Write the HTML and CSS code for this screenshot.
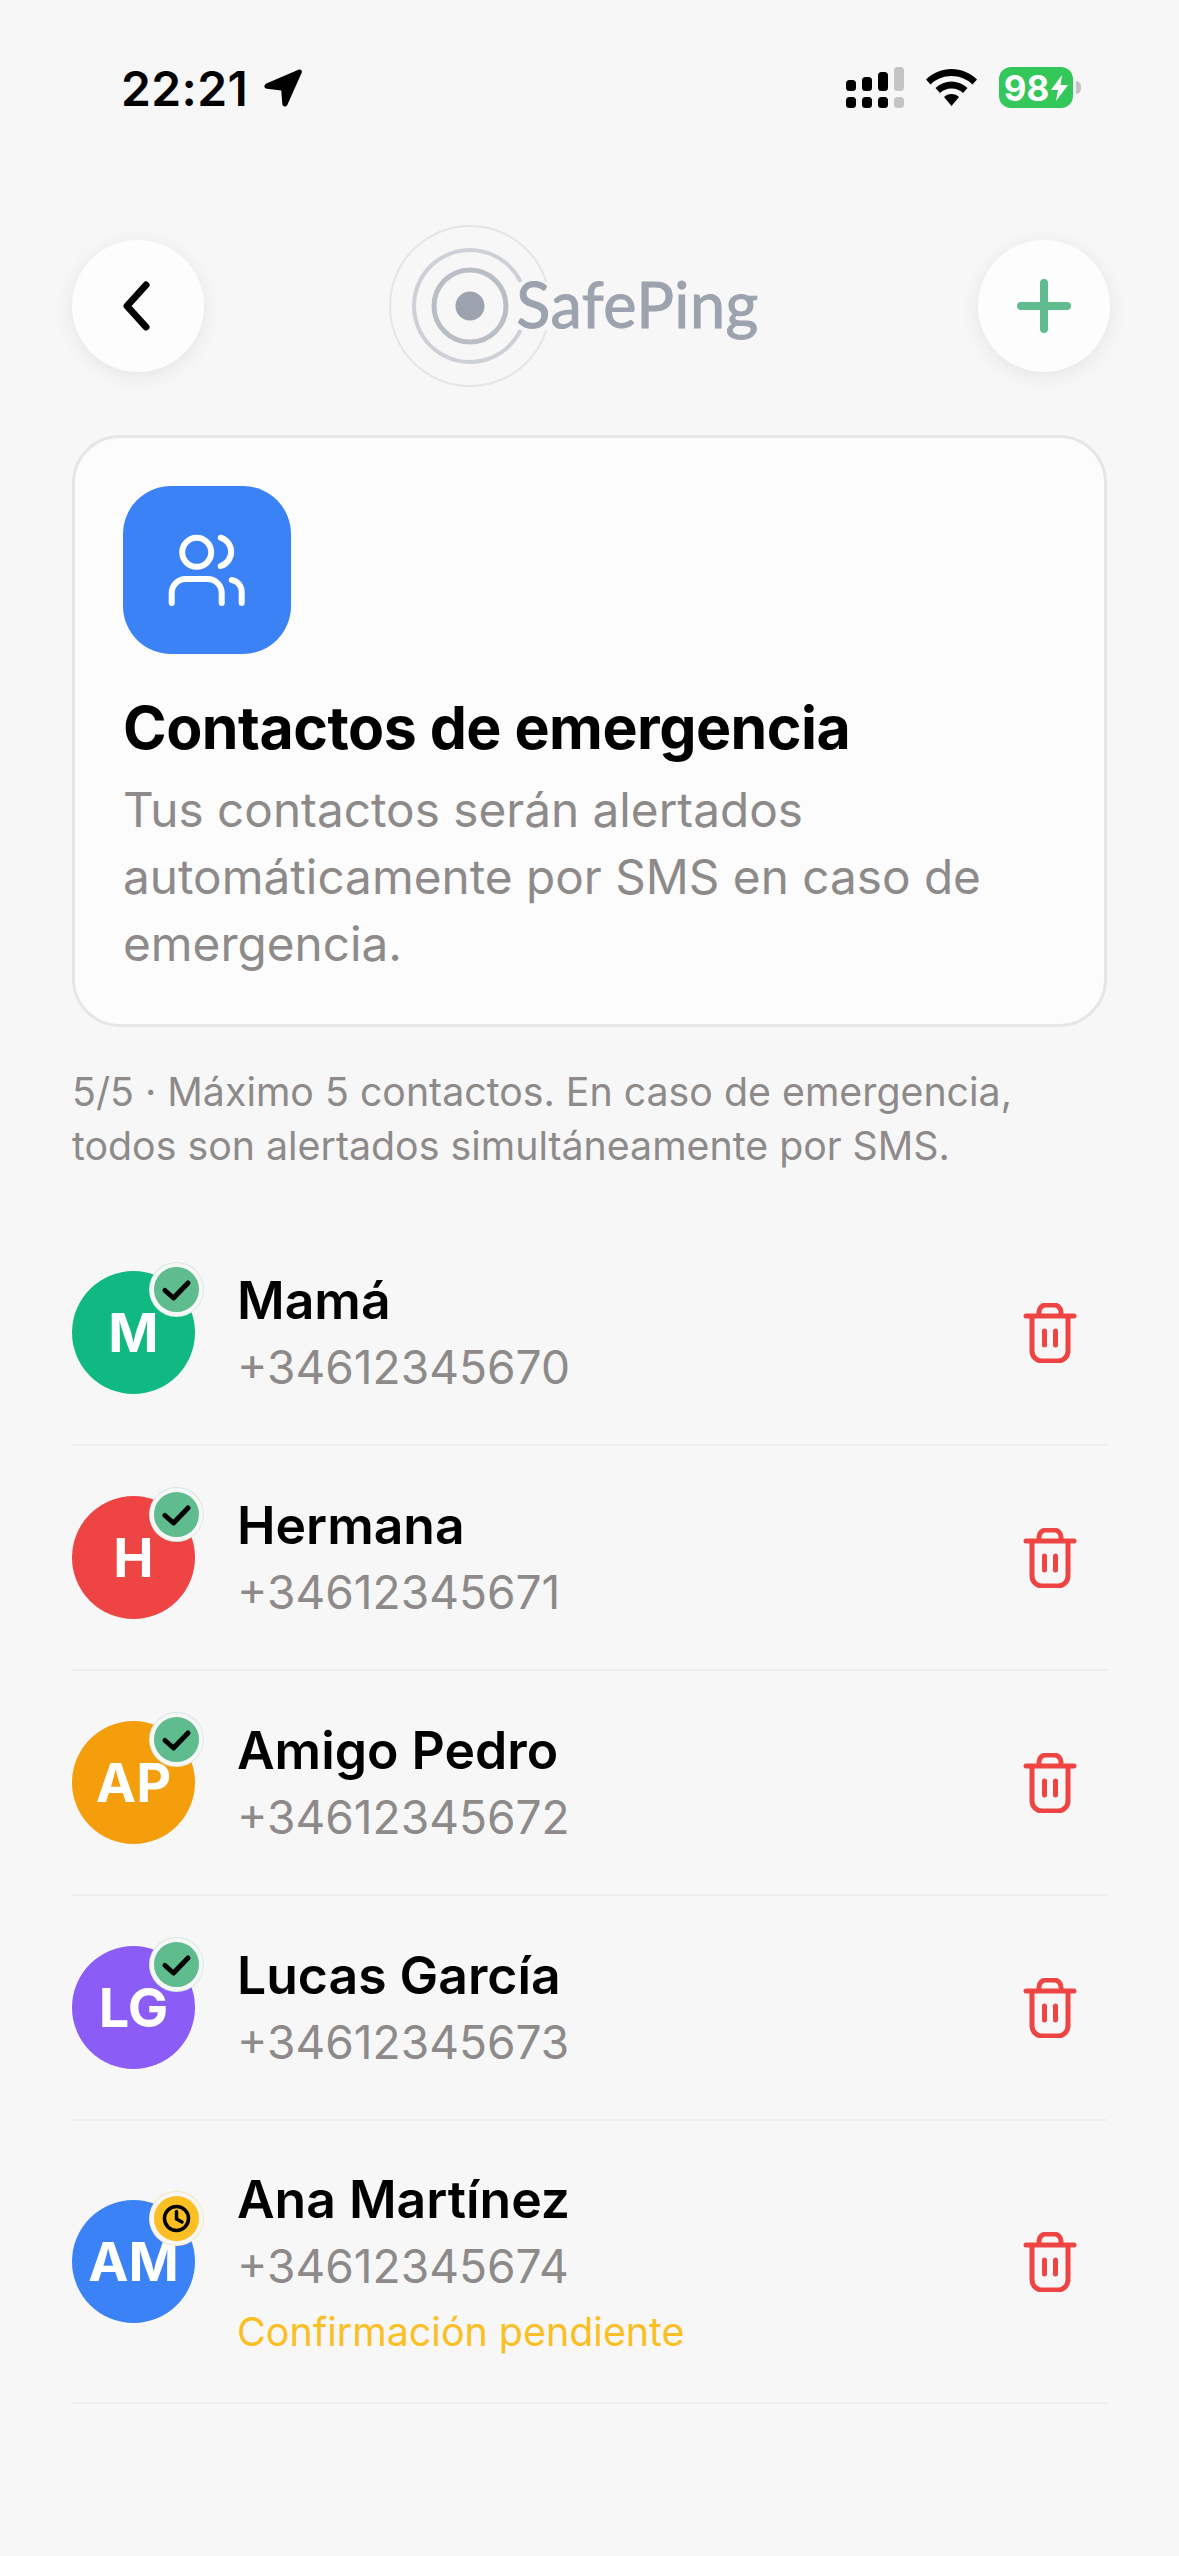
FILE: index.html
```html
<!DOCTYPE html>
<html lang="es">
<head>
    <meta charset="UTF-8">
    <meta name="viewport" content="width=device-width, initial-scale=1.0">
    <title>SafePing - Contactos de emergencia</title>
    <link rel="stylesheet" href="styles.css">
</head>
<body>
    <!-- Shared icons -->
    <svg class="icon-defs" aria-hidden="true">
        <symbol id="icon-trash" viewBox="0 0 54 60">
            <path d="M3 13H51M16 13V9a7 7 0 0 1 7-7h8a7 7 0 0 1 7 7v4M9 13V48a10 10 0 0 0 10 10h16a10 10 0 0 0 10-10V13M21.500 28V42M32.500 28V42"/>
        </symbol>
        <symbol id="icon-check" viewBox="0 0 45 45">
            <path d="M11 23.500L19.500 31L34 16"/>
        </symbol>
        <symbol id="icon-clock" viewBox="0 0 45 45">
            <circle cx="22.500" cy="22.500" r="12"/>
            <path d="M22.500 15.500V23L28 26"/>
        </symbol>
    </svg>

    <div class="status-bar">
        <div class="status-left">
            <span class="status-time">22:21</span>
            <svg class="status-arrow" viewBox="0 0 40 40"><path d="M36 1.500C38 1 39.500 2.500 38.800 4.500L24.500 36.500C23.300 39.500 19.500 39 19.300 36L18.300 22.500L4 20.800C1 20.500 .5 17 3.300 15.500Z"/></svg>
        </div>
        <div class="status-right">
            <svg class="status-signal" viewBox="0 0 58 41">
                <rect x="0" y="13" width="10" height="11" rx="3.500"/>
                <rect x="16" y="10" width="10" height="14" rx="3.500"/>
                <rect x="32" y="5" width="10" height="19" rx="3.500"/>
                <rect class="signal-off" x="48" y="0" width="10" height="24" rx="3.500"/>
                <rect x="0" y="30" width="10" height="11" rx="3.500"/>
                <rect x="16" y="30" width="10" height="11" rx="3.500"/>
                <rect x="32" y="30" width="10" height="11" rx="3.500"/>
                <rect class="signal-off" x="48" y="30" width="10" height="11" rx="3.500"/>
            </svg>
            <svg class="status-wifi" viewBox="0 0 51 37">
                <path d="M25.500 0C35 0 44 3.800 51 10.500L46.500 15.500C40.800 10 33.500 7 25.500 7S10.200 10 4.500 15.500L0 10.500C7 3.800 16 0 25.500 0Z"/>
                <path d="M25.500 12.500C31.500 12.500 37 14.800 41.500 19L37 24C34 21 30 19.500 25.500 19.500S17 21 14 24L9.500 19C14 14.800 19.500 12.500 25.500 12.500Z"/>
                <path d="M25.500 25C28.500 25 31 26 33 28L25.500 37L18 28C20 26 22.500 25 25.500 25Z"/>
            </svg>
            <div class="battery">
                <div class="battery-body">
                    <span>98</span>
                    <svg class="battery-bolt" viewBox="0 0 17 26"><path d="M11 0L0 15H7L5 26L17 10H9.500Z"/></svg>
                </div>
                <div class="battery-tip"></div>
            </div>
        </div>
    </div>

    <div class="page">
        <div class="top-bar">
            <button class="round-btn">
                <svg viewBox="0 0 40 56"><path class="chevron" d="M28 7L9 28L28 49"/></svg>
            </button>
            <div class="logo">
                <svg class="logo-rings" viewBox="-82 -82 164 164">
                    <path class="ring-outer" d="M76.300 -24A80 80 0 1 0 76.300 24"/>
                    <path class="ring-mid" d="M50.600 -24A56 56 0 1 0 50.600 24"/>
                    <circle class="ring-inner" r="36"/>
                    <circle class="ring-dot" r="14.500"/>
                </svg>
                <span class="logo-text">SafePing</span>
            </div>
            <button class="round-btn round-btn-add">
                <svg viewBox="0 0 54 54"><path class="plus" d="M27 4V50M4 27H50"/></svg>
            </button>
        </div>

        <div class="info-card">
            <div class="info-icon">
                <svg viewBox="0 0 96 96">
                    <circle cx="37.700" cy="30.300" r="14.500"/>
                    <path d="M12.700 81V71a14 14 0 0 1 14-14h22a14 14 0 0 1 14 14v10M61.700 15.700A14.800 14.800 0 0 1 61.700 44M72.700 58a12 12 0 0 1 10 12V81"/>
                </svg>
            </div>
            <h1>Contactos de emergencia</h1>
            <p>Tus contactos serán alertados automáticamente por SMS en caso de emergencia.</p>
        </div>

        <p class="note">5/5 · Máximo 5 contactos. En caso de emergencia, todos son alertados simultáneamente por SMS.</p>

        <div class="contact-list">
            <div class="contact-row">
                <div class="avatar avatar-green">M
                    <span class="badge badge-ok"><svg><use href="#icon-check"/></svg></span>
                </div>
                <div class="contact-info">
                    <div class="contact-name">Mamá</div>
                    <div class="contact-phone">+34612345670</div>
                </div>
                <svg class="trash-icon"><use href="#icon-trash"/></svg>
            </div>
            <div class="contact-row">
                <div class="avatar avatar-red">H
                    <span class="badge badge-ok"><svg><use href="#icon-check"/></svg></span>
                </div>
                <div class="contact-info">
                    <div class="contact-name">Hermana</div>
                    <div class="contact-phone">+34612345671</div>
                </div>
                <svg class="trash-icon"><use href="#icon-trash"/></svg>
            </div>
            <div class="contact-row">
                <div class="avatar avatar-orange">AP
                    <span class="badge badge-ok"><svg><use href="#icon-check"/></svg></span>
                </div>
                <div class="contact-info">
                    <div class="contact-name">Amigo Pedro</div>
                    <div class="contact-phone">+34612345672</div>
                </div>
                <svg class="trash-icon"><use href="#icon-trash"/></svg>
            </div>
            <div class="contact-row">
                <div class="avatar avatar-purple">LG
                    <span class="badge badge-ok"><svg><use href="#icon-check"/></svg></span>
                </div>
                <div class="contact-info">
                    <div class="contact-name">Lucas García</div>
                    <div class="contact-phone">+34612345673</div>
                </div>
                <svg class="trash-icon"><use href="#icon-trash"/></svg>
            </div>
            <div class="contact-row">
                <div class="avatar avatar-blue">AM
                    <span class="badge badge-wait"><svg><use href="#icon-clock"/></svg></span>
                </div>
                <div class="contact-info">
                    <div class="contact-name">Ana Martínez</div>
                    <div class="contact-phone">+34612345674</div>
                    <div class="contact-pending">Confirmación pendiente</div>
                </div>
                <svg class="trash-icon"><use href="#icon-trash"/></svg>
            </div>
        </div>
    </div>
</body>
</html>
```

FILE: styles.css
```css
body {
    font-family: 'Inter', sans-serif;
    background: #f7f7f7;
    color: #000;
    margin: 0;
    min-height: 2556px;
}

.icon-defs {
    display: none;
}

/* Status bar */
.status-bar {
    display: flex;
    justify-content: space-between;
    align-items: center;
    height: 41px;
    padding: 67px 98px 0 121px;
}

.status-left {
    display: flex;
    align-items: center;
    gap: 15px;
}

.status-time {
    padding-top: 2px;
    font-size: 48px;
    font-weight: 600;
    line-height: 41px;
    letter-spacing: 0.4px;
}

.status-arrow {
    width: 40px;
    height: 40px;
}

.status-right {
    display: flex;
    align-items: center;
    gap: 22px;
}

.status-signal {
    width: 58px;
    height: 41px;
}

.signal-off {
    fill: #c4c4c4;
}

.status-wifi {
    width: 51px;
    height: 37px;
}

.battery {
    display: flex;
    align-items: center;
    gap: 3px;
}

.battery-body {
    display: flex;
    align-items: center;
    justify-content: center;
    gap: 2px;
    width: 74px;
    height: 41px;
    background: #34c759;
    border-radius: 12px;
    color: #fff;
    font-size: 35px;
    font-weight: 700;
}

.battery-bolt {
    width: 17px;
    height: 26px;
    fill: #fff;
}

.battery-tip {
    width: 5px;
    height: 13px;
    background: #c4c4c4;
    border-radius: 0 6px 6px 0;
}

/* Page */
.page {
    padding: 0 72px;
}

.top-bar {
    display: flex;
    justify-content: space-between;
    align-items: center;
    height: 132px;
    margin: 132px -3px 0 0;
}

.round-btn {
    display: flex;
    align-items: center;
    justify-content: center;
    width: 132px;
    height: 132px;
    padding: 0;
    background: #fdfdfd;
    border: none;
    border-radius: 50%;
    box-shadow: 0 4px 20px rgba(0, 0, 0, 0.08);
}

.round-btn svg {
    width: 40px;
    height: 56px;
    fill: none;
    stroke-linecap: round;
    stroke-linejoin: round;
}

.chevron {
    stroke: #000;
    stroke-width: 7;
}

.round-btn-add svg {
    width: 54px;
    height: 54px;
}

.plus {
    stroke: #5fbc8f;
    stroke-width: 8;
}

.logo {
    display: flex;
    align-items: center;
    height: 132px;
    margin-right: 35px;
}

.logo-rings {
    flex-shrink: 0;
    width: 164px;
    height: 164px;
    fill: none;
}

.ring-outer {
    stroke: #e4e5e8;
    stroke-width: 2;
}

.ring-mid {
    stroke: #cdd0d6;
    stroke-width: 4;
}

.ring-inner {
    stroke: #b9bdc6;
    stroke-width: 5;
}

.ring-dot {
    fill: #9ca3af;
}

.logo-text {
    margin: 0 0 6px -36px;
    color: #9ca3af;
    font-family: 'Lato', sans-serif;
    font-size: 63px;
    letter-spacing: 0.5px;
    -webkit-text-stroke: 1px #9ca3af;
}

/* Info card */
.info-card {
    box-sizing: border-box;
    height: 592px;
    margin-top: 63px;
    padding: 48px 48px;
    background: #fcfcfc;
    border: 3px solid #e6e6e6;
    border-radius: 48px;
}

.info-icon {
    display: flex;
    align-items: center;
    justify-content: center;
    width: 168px;
    height: 168px;
    background: #3b82f6;
    border-radius: 48px;
}

.info-icon svg {
    width: 96px;
    height: 96px;
    fill: none;
    stroke: #fff;
    stroke-width: 6;
    stroke-linecap: round;
}

.info-card h1 {
    margin: 40px 0 0;
    font-size: 59px;
    font-weight: 700;
    line-height: 67px;
    letter-spacing: -0.5px;
}

.info-card p {
    margin: 16px 0 0;
    color: #8e8a8a;
    font-size: 47.7px;
    line-height: 67px;
}

.note {
    margin: 38px 0 0;
    color: #8e8a8a;
    font-size: 39.3px;
    line-height: 54px;
}

/* Contact rows */
.contact-list {
    margin-top: 48px;
}

.contact-row {
    box-sizing: border-box;
    display: flex;
    align-items: center;
    min-height: 225px;
    padding: 43px 30px 43px 0;
    border-bottom: 2px solid #eeeeee;
}

.avatar {
    position: relative;
    flex-shrink: 0;
    display: flex;
    align-items: center;
    justify-content: center;
    width: 123px;
    height: 123px;
    border-radius: 50%;
    color: #fff;
    font-size: 54px;
    font-weight: 700;
}

.avatar-green { background: #10b981; }
.avatar-red { background: #ef4444; }
.avatar-orange { background: #f59e0b; }
.avatar-purple { background: #8b5cf6; }
.avatar-blue { background: #3b82f6; }

.badge {
    position: absolute;
    top: -8px;
    right: -8px;
    box-sizing: border-box;
    width: 53px;
    height: 53px;
    border: 4px solid #f7f7f7;
    border-radius: 50%;
}

.badge svg {
    display: block;
    width: 45px;
    height: 45px;
    fill: none;
    stroke: #000;
    stroke-linecap: round;
    stroke-linejoin: round;
}

.badge-ok {
    background: #5fbc8f;
    box-shadow: 0 0 0 1px #d5ebe0;
}

.badge-ok svg {
    stroke-width: 5;
}

.badge-wait {
    background: #fbbf24;
    box-shadow: 0 0 0 1px #f6e7c3;
}

.badge-wait svg {
    stroke-width: 3.500;
}

.contact-info {
    flex: 1;
    margin-left: 42px;
    padding-top: 2px;
}

.contact-name {
    font-size: 51.7px;
    font-weight: 600;
    line-height: 67px;
}

.contact-phone {
    color: #8e8a8a;
    font-size: 46.1px;
    line-height: 67px;
}

.contact-pending {
    margin-bottom: -6px;
    color: #fbbf24;
    font-size: 39.4px;
    line-height: 65px;
}

.trash-icon {
    flex-shrink: 0;
    width: 54px;
    height: 60px;
    fill: none;
    stroke: #ef4444;
    stroke-width: 5;
    stroke-linecap: round;
    stroke-linejoin: round;
}
```
